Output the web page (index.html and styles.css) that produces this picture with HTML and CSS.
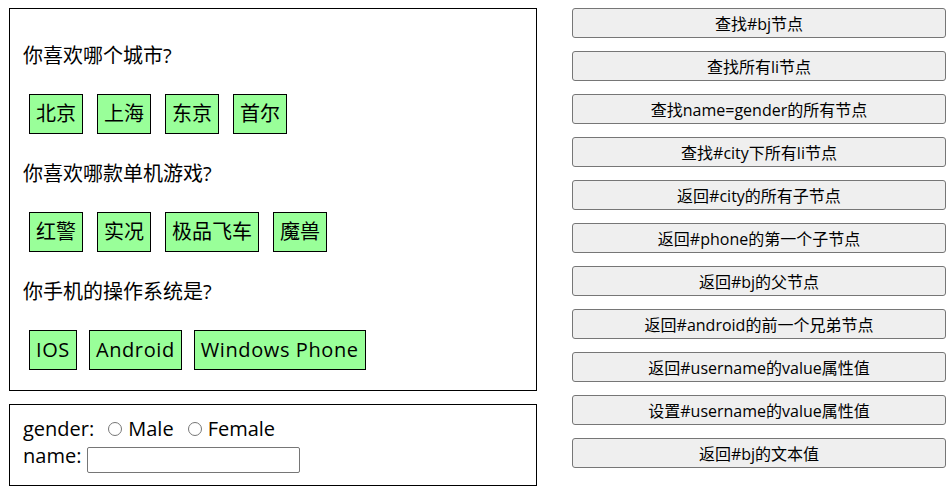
FILE: index.html
```html
<!DOCTYPE html>
<html lang="zh">
<head>
<meta charset="utf-8">
<title>DOM 查询</title>
<link rel="stylesheet" href="styles.css">
</head>
<body>
<div class="page">
  <div class="left">
    <div class="inner">
      <p class="question">你喜欢哪个城市?</p>
      <ul class="options" id="city">
        <li id="bj">北京</li>
        <li>上海</li>
        <li>东京</li>
        <li>首尔</li>
      </ul>
      <p class="question">你喜欢哪款单机游戏?</p>
      <ul class="options" id="game">
        <li id="rl">红警</li>
        <li>实况</li>
        <li>极品飞车</li>
        <li>魔兽</li>
      </ul>
      <p class="question">你手机的操作系统是?</p>
      <ul class="options options-latin" id="phone">
        <li>IOS</li>
        <li id="android">Android</li>
        <li>Windows Phone</li>
      </ul>
    </div>
    <div class="inner form-box">
      <div class="form-line">gender:<label class="radio"><input type="radio" name="gender" value="male">Male</label><label class="radio"><input type="radio" name="gender" value="female">Female</label></div>
      <div class="form-line form-line-name">name:<input type="text" class="text-input" id="username" name="name"></div>
    </div>
  </div>
  <div class="btn-list">
    <button class="btn" type="button">查找#bj节点</button>
    <button class="btn" type="button">查找所有li节点</button>
    <button class="btn" type="button">查找name=gender的所有节点</button>
    <button class="btn" type="button">查找#city下所有li节点</button>
    <button class="btn" type="button">返回#city的所有子节点</button>
    <button class="btn" type="button">返回#phone的第一个子节点</button>
    <button class="btn" type="button">返回#bj的父节点</button>
    <button class="btn" type="button">返回#android的前一个兄弟节点</button>
    <button class="btn" type="button">返回#username的value属性值</button>
    <button class="btn" type="button">设置#username的value属性值</button>
    <button class="btn" type="button">返回#bj的文本值</button>
  </div>
</div>
</body>
</html>
```

FILE: styles.css
```css
html, body {
  margin: 0;
  padding: 0;
  background: #ffffff;
}

body {
  font-family: "Open Sans", "Noto Sans CJK SC", sans-serif;
  color: #000000;
}

.page {
  display: flex;
  align-items: flex-start;
  gap: 35px;
  padding: 8px 0 0 9px;
}

.left {
  display: flex;
  flex-direction: column;
  gap: 13px;
  width: 528px;
}

.inner {
  border: 1px solid #000000;
  padding: 33px 12px 20px 13px;
}

.question {
  margin: 0 0 24px 0;
  font-size: 20px;
  line-height: 28px;
}

.options {
  list-style: none;
  margin: 0 0 26px 0;
  padding: 0 0 0 6px;
  display: flex;
  gap: 14px;
}

.options:last-child {
  margin-bottom: 0;
}

.options li {
  border: 1px solid #000000;
  background: #99ff99;
  padding: 5px 6px;
  font-size: 20px;
  line-height: 28px;
}

.options-latin {
  gap: 12px;
}

.options-latin li {
  letter-spacing: 0.6px;
}

.form-box {
  padding: 10px 12px 12px 13px;
  font-size: 20px;
}

.form-line {
  line-height: 27px;
  display: flex;
  align-items: center;
}

.form-line-name {
  align-items: flex-start;
}

.radio {
  display: inline-flex;
  align-items: center;
}

.radio input {
  margin: 0 6px 0 14px;
  width: 14px;
  height: 14px;
}

.text-input {
  margin: 5px 0 0 6px;
  width: 213px;
  height: 26px;
  box-sizing: border-box;
  border: 1px solid #767676;
  border-radius: 2px;
  padding: 1px 2px;
  font-size: 16px;
}

.btn-list {
  display: flex;
  flex-direction: column;
  gap: 13px;
}

.btn {
  width: 374px;
  height: 30px;
  box-sizing: border-box;
  border: 1px solid #767676;
  border-radius: 3px;
  background: #efefef;
  color: #000000;
  font-family: "Open Sans", "Noto Sans CJK SC", sans-serif;
  font-size: 16px;
  padding: 0;
  margin: 0;
}
```
